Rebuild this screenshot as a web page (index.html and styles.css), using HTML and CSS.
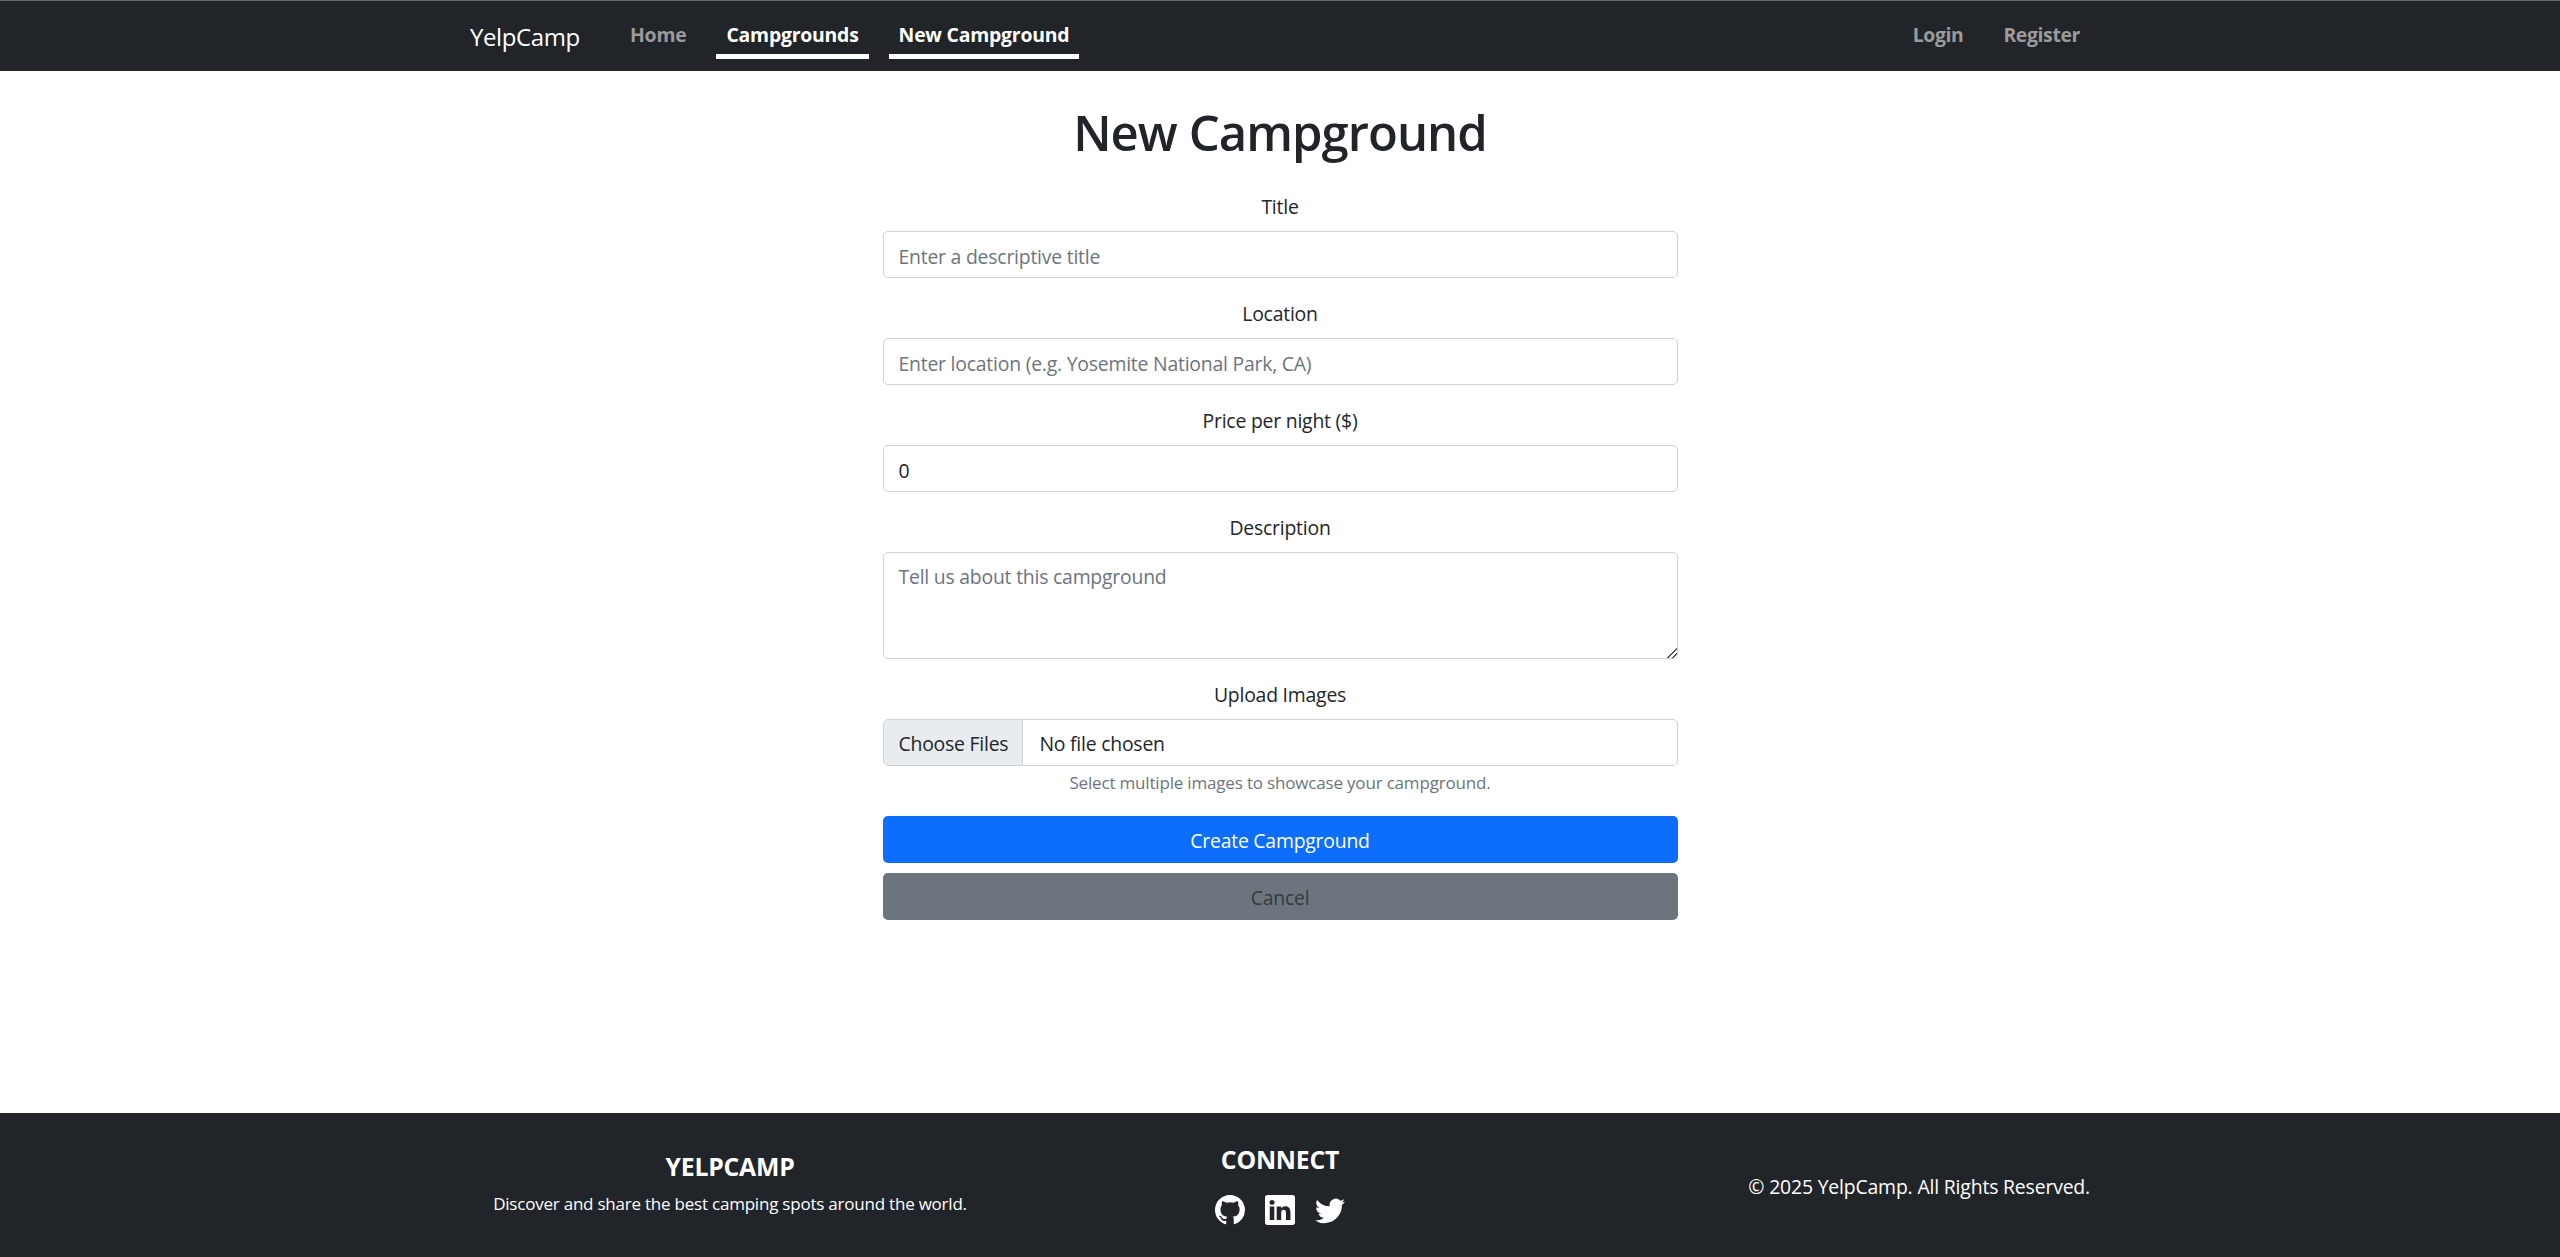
FILE: index.html
```
<!DOCTYPE html>
<html lang="en">
<head>
<meta charset="utf-8">
<title>New Campground - YelpCamp</title>
<link rel="stylesheet" href="styles.css">
</head>
<body>
<header class="navbar">
  <nav class="container navbar-inner">
    <a class="brand" href="#">YelpCamp</a>
    <div class="nav-links">
      <a class="nav-link" href="#">Home</a>
      <a class="nav-link active" href="#">Campgrounds</a>
      <a class="nav-link active" href="#">New Campground</a>
    </div>
    <div class="nav-links nav-end">
      <a class="nav-link" href="#">Login</a>
      <a class="nav-link" href="#">Register</a>
    </div>
  </nav>
</header>
<main class="content">
  <h1 class="page-title">New Campground</h1>
  <form class="form">
    <div class="field">
      <label class="label" for="title">Title</label>
      <input class="control" id="title" type="text" placeholder="Enter a descriptive title">
    </div>
    <div class="field">
      <label class="label" for="location">Location</label>
      <input class="control" id="location" type="text" placeholder="Enter location (e.g. Yosemite National Park, CA)">
    </div>
    <div class="field">
      <label class="label" for="price">Price per night ($)</label>
      <input class="control" id="price" type="number" value="0">
    </div>
    <div class="field">
      <label class="label" for="description">Description</label>
      <textarea class="control textarea" id="description" rows="3" placeholder="Tell us about this campground"></textarea>
    </div>
    <div class="field">
      <label class="label" for="images">Upload Images</label>
      <input class="control file" id="images" type="file" multiple>
      <div class="help">Select multiple images to showcase your campground.</div>
    </div>
    <div class="actions">
      <button class="btn btn-primary" type="button">Create Campground</button>
      <a class="btn btn-secondary" href="#">Cancel</a>
    </div>
  </form>
</main>
<footer class="footer">
  <div class="container footer-inner">
    <div class="footer-col">
      <h5 class="footer-title">YELPCAMP</h5>
      <p class="tagline">Discover and share the best camping spots around the world.</p>
    </div>
    <div class="footer-col">
      <h5 class="footer-title">CONNECT</h5>
      <div class="social">
        <a class="social-link" href="#" aria-label="GitHub"><svg viewBox="0 0 16 16"><path d="M8 0C3.58 0 0 3.58 0 8c0 3.54 2.29 6.53 5.47 7.59.4.07.55-.17.55-.38 0-.19-.01-.82-.01-1.49-2.01.37-2.53-.49-2.69-.94-.09-.23-.48-.94-.82-1.13-.28-.15-.68-.52-.01-.53.63-.01 1.08.58 1.23.82.72 1.21 1.87.87 2.33.66.07-.52.28-.87.51-1.07-1.78-.2-3.64-.89-3.64-3.95 0-.87.31-1.59.82-2.15-.08-.2-.36-1.02.08-2.12 0 0 .67-.21 2.2.82.64-.18 1.32-.27 2-.27.68 0 1.36.09 2 .27 1.53-1.04 2.2-.82 2.2-.82.44 1.1.16 1.92.08 2.12.51.56.82 1.27.82 2.15 0 3.07-1.87 3.75-3.65 3.95.29.25.54.73.54 1.48 0 1.07-.01 1.93-.01 2.2 0 .21.15.46.55.38A8.012 8.012 0 0 0 16 8c0-4.42-3.58-8-8-8z"/></svg></a>
        <a class="social-link" href="#" aria-label="LinkedIn"><svg viewBox="0 0 16 16"><path d="M0 1.146C0 .513.526 0 1.175 0h13.65C15.474 0 16 .513 16 1.146v13.708c0 .633-.526 1.146-1.175 1.146H1.175C.526 16 0 15.487 0 14.854V1.146zm4.943 12.248V6.169H2.542v7.225h2.401zm-1.2-8.212c.837 0 1.358-.554 1.358-1.248-.015-.709-.52-1.248-1.342-1.248-.822 0-1.359.54-1.359 1.248 0 .694.521 1.248 1.327 1.248h.016zm4.908 8.212V9.359c0-.216.016-.432.08-.586.173-.431.568-.878 1.232-.878.869 0 1.216.662 1.216 1.634v3.865h2.401V9.25c0-2.22-1.184-3.252-2.764-3.252-1.274 0-1.845.7-2.165 1.193v.025h-.016a5.54 5.54 0 0 1 .016-.025V6.169h-2.4c.03.678 0 7.225 0 7.225h2.4z"/></svg></a>
        <a class="social-link" href="#" aria-label="Twitter"><svg viewBox="0 0 16 16"><path d="M5.026 15c6.038 0 9.341-5.003 9.341-9.334 0-.14 0-.282-.006-.422A6.685 6.685 0 0 0 16 3.542a6.658 6.658 0 0 1-1.889.518 3.301 3.301 0 0 0 1.447-1.817 6.533 6.533 0 0 1-2.087.793A3.286 3.286 0 0 0 7.875 6.03a9.325 9.325 0 0 1-6.767-3.429 3.289 3.289 0 0 0 1.018 4.382A3.323 3.323 0 0 1 .64 6.575v.045a3.288 3.288 0 0 0 2.632 3.218 3.203 3.203 0 0 1-.865.115 3.23 3.23 0 0 1-.614-.057 3.283 3.283 0 0 0 3.067 2.277A6.588 6.588 0 0 1 .78 13.58a6.32 6.32 0 0 1-.78-.045A9.344 9.344 0 0 0 5.026 15z"/></svg></a>
      </div>
    </div>
    <div class="footer-col copyright">© 2025 YelpCamp. All Rights Reserved.</div>
  </div>
</footer>
</body>
</html>
```
FILE: styles.css
```
* { box-sizing: border-box; }

body {
  margin: 0;
  min-height: 100vh;
  display: flex;
  flex-direction: column;
  background: #fff;
  color: #212529;
  font: 400 19.4px/30px "Open Sans", "Noto Sans", sans-serif;
  letter-spacing: -0.22px;
}

a { text-decoration: none; }

.container {
  width: 1650px;
  margin: 0 auto;
}

/* Navigation bar */
.navbar {
  height: 71px;
  border-top: 1px solid #676b6d;
  background: #212529;
}

.navbar-inner {
  height: 70px;
  padding: 0 15px;
  display: flex;
  align-items: center;
}

.brand {
  width: 130px;
  margin-right: 20px;
  padding-top: 1px;
  color: #fff;
  font-size: 24px;
  letter-spacing: -0.4px;
}

.nav-links {
  display: flex;
  gap: 20px;
  margin-bottom: 3px;
}

.nav-end { margin-left: auto; }

.nav-link {
  height: 49px;
  padding: 10px 10px 4px;
  border-bottom: 5px solid transparent;
  color: #9b9b9b;
  font-weight: 700;
  letter-spacing: -0.22px;
}

.nav-end .nav-link { letter-spacing: -0.36px; }

.nav-link.active {
  border-bottom-color: #fff;
  color: #fff;
}

/* Form */
.content {
  flex: 1;
  width: 795px;
  margin: 0 auto;
  padding-top: 30px;
  text-align: center;
}

.page-title {
  margin: 0;
  padding-top: 1px;
  height: 90px;
  font-size: 49px;
  font-weight: 600;
  line-height: 60px;
  letter-spacing: -0.95px;
}

.field { margin-bottom: 20px; }

.label {
  display: block;
  margin-bottom: 9px;
  padding-top: 1px;
}

.control {
  display: block;
  width: 100%;
  height: 47px;
  margin: 0;
  padding: 9px 15px 6px;
  border: 1px solid #ced2d5;
  border-radius: 5px;
  background: #fff;
  color: #212529;
  font: inherit;
  letter-spacing: inherit;
}

.control::placeholder {
  color: #6c757d;
  opacity: 1;
}

.textarea {
  height: 107px;
  resize: vertical;
}

.textarea::-webkit-resizer {
  background: linear-gradient(135deg, transparent 66%, #555 66% 71%, transparent 71% 83%, #555 83% 88%, transparent 88%);
}

.file {
  overflow: hidden;
}

.file::file-selector-button {
  margin: -9px 16px -6px -15px;
  padding: 9px 14px 6px 15px;
  border: 0 solid #ced2d5;
  border-right-width: 1px;
  border-radius: 0;
  background: #e9ecef;
  color: #212529;
  font: inherit;
  letter-spacing: inherit;
}

.help {
  margin: 4px 0 21px;
  color: #6c757d;
  font-size: 17px;
  line-height: 25px;
  letter-spacing: -0.18px;
}

.actions {
  display: grid;
  gap: 10px;
}

.btn {
  height: 47px;
  padding: 10px 16px 7px;
  border: 0;
  border-radius: 5px;
  font: inherit;
  letter-spacing: inherit;
  text-align: center;
}

.btn-primary {
  background: #0d6efd;
  color: #fff;
}

.btn-secondary {
  background: #6c757d;
  color: #343a40;
}

/* Footer */
.footer {
  height: 144px;
  background: #212529;
  color: #fff;
}

.footer-inner {
  height: 100%;
  display: grid;
  grid-template-columns: repeat(3, 1fr);
  align-items: center;
}

.footer-col {
  padding: 0 15px;
  text-align: center;
}

.footer-title {
  margin: -2px 0 11px;
  font-size: 24.8px;
  font-weight: 700;
  line-height: 30px;
}

.tagline {
  margin: -1px 0 0;
  font-size: 17px;
  line-height: 26px;
}

.social {
  display: flex;
  justify-content: center;
  gap: 20px;
  padding-top: 10px;
}

.social-link {
  width: 30px;
  height: 30px;
}

.social-link svg {
  display: block;
  width: 30px;
  height: 30px;
  fill: #fff;
}

.copyright {
  padding-top: 3px;
  text-align: right;
  letter-spacing: -0.17px;
}
```
